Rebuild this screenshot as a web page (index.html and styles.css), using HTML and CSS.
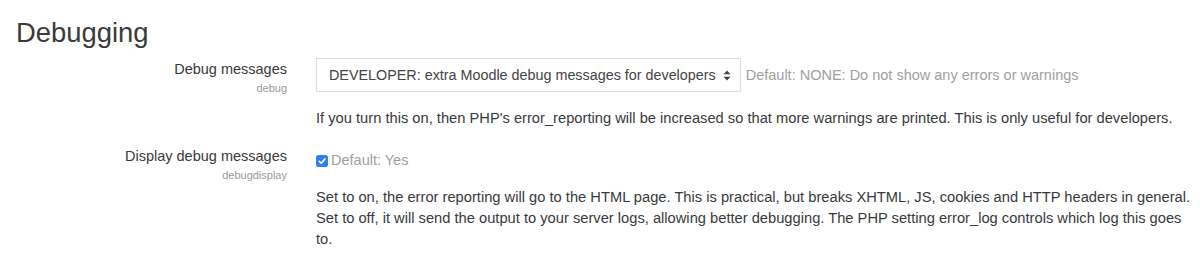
FILE: index.html
```html
<!DOCTYPE html>
<html lang="en">
<head>
  <meta charset="UTF-8" />
  <title>Debugging</title>
  <link rel="stylesheet" href="styles.css">
</head>
<body>
  <div class="page">
    <h2>Debugging</h2>

    <div class="setting">
      <div class="setting-label">
        <label for="id_debug">Debug messages</label>
        <span class="setting-name">debug</span>
      </div>
      <div class="setting-body">
        <div class="control">
          <div class="select" id="id_debug">
            <span>DEVELOPER: extra Moodle debug messages for developers</span>
            <svg class="arrows" width="8" height="11" viewBox="0 0 8 11">
              <path d="M4 0.5 L7.5 4.2 H0.5 Z M4 10.5 L7.5 6.8 H0.5 Z" fill="#444"/>
            </svg>
          </div>
          <span class="default">Default: NONE: Do not show any errors or warnings</span>
        </div>
        <p class="desc">If you turn this on, then PHP's error_reporting will be increased so that more warnings are printed. This is only useful for developers.</p>
      </div>
    </div>

    <div class="setting">
      <div class="setting-label">
        <label for="id_debugdisplay">Display debug messages</label>
        <span class="setting-name">debugdisplay</span>
      </div>
      <div class="setting-body">
        <div class="control check">
          <span class="checkbox" id="id_debugdisplay">
            <svg width="12" height="12" viewBox="0 0 12 12">
              <rect x="0" y="0" width="12" height="12" rx="2.5" fill="#2f80ed"/>
              <path d="M3.2 6.2 L5.2 8.2 L8.9 3.9" fill="none" stroke="#fff" stroke-width="1.6" stroke-linecap="round" stroke-linejoin="round"/>
            </svg>
          </span>
          <span class="default">Default: Yes</span>
        </div>
        <p class="desc">Set to on, the error reporting will go to the HTML page. This is practical, but breaks XHTML, JS, cookies and HTTP headers in general. Set to off, it will send the output to your server logs, allowing better debugging. The PHP setting error_log controls which log this goes to.</p>
      </div>
    </div>
  </div>
</body>
</html>
```

FILE: styles.css
```css
* {
  box-sizing: border-box;
}

body {
  margin: 0;
  background: #fff;
  color: #373a3c;
  font-family: 'Liberation Sans', Arial, sans-serif;
  font-size: 14.5px;
}

.page {
  padding: 0 4px 0 16px;
}

h2 {
  margin: 17px 0 9px;
  font-size: 27.4px;
  line-height: 32px;
  font-weight: 400;
  color: #3a3a3a;
}

.setting {
  display: grid;
  grid-template-columns: 271px 1fr;
  column-gap: 29px;
  margin-bottom: 16px;
}

.setting-label {
  display: flex;
  flex-direction: column;
  align-items: flex-end;
  text-align: right;
  padding-top: 1px;
}

.setting-label label {
  line-height: 21px;
}

.setting-name {
  font-size: 11px;
  line-height: 16px;
  color: #999;
}

.control {
  display: flex;
  align-items: center;
  gap: 5px;
}

.control.check {
  padding-top: 5px;
  gap: 3px;
  line-height: 21px;
}

.select {
  display: flex;
  align-items: center;
  gap: 7px;
  height: 34px;
  padding: 0 9px 0 12px;
  border: 1px solid #dcdcdc;
  color: #444;
  background: #fff;
  font-size: 14.35px;
}

.arrows {
  display: block;
}

.default {
  color: #a0a0a0;
}

.checkbox svg {
  display: block;
  margin-top: 1px;
}

.desc {
  margin: 15.5px 0 0;
  line-height: 21px;
  font-size: 14.7px;
}

.check + .desc {
  margin-top: 16px;
}
```
